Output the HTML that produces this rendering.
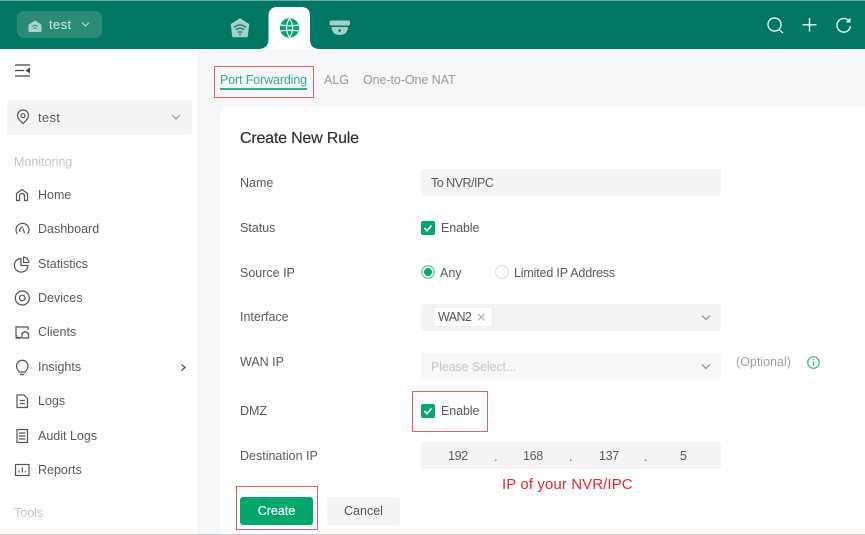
<!DOCTYPE html>
<html>
<head>
<meta charset="utf-8">
<style>
html,body{margin:0;padding:0;}
body{width:865px;height:535px;overflow:hidden;position:relative;background:#f6f7f9;font-family:"Liberation Sans",sans-serif;color:#555;}
.a{position:absolute;}
.t{position:absolute;white-space:nowrap;font-size:12.5px;line-height:17px;color:#5a5a5a;}
.box{position:absolute;background:#f4f4f4;border-radius:3px;}
.red{position:absolute;border:1px solid #ee5a62;box-sizing:border-box;}
.cb{position:absolute;width:14px;height:14px;background:#00a86b;border-radius:2px;}
svg{position:absolute;overflow:visible;}
</style>
</head>
<body>
<!-- top bar -->
<div class="a" style="left:0;top:0;width:865px;height:49px;background:#017864;"></div>
<div class="a" style="left:0;top:0;width:865px;height:1px;background:#6fa99c;"></div>
<div class="a" style="left:17px;top:11px;width:85px;height:27px;background:#2a8b79;border-radius:7px;"></div>
<svg style="left:0;top:0" width="865" height="49">
  <path d="M29 25 L35 21 L41 25 L41 31.500 L29 31.500 Z" fill="#a8d5cb" stroke="#a8d5cb" stroke-width="1" stroke-linejoin="round"/>
  <path d="M32 26.500 Q35 24 38 26.500 M33.500 28.500 Q35 27.300 36.500 28.500" fill="none" stroke="#2a8b79" stroke-width="1"/>
  <path d="M82 22.500 L85.500 26 L89 22.500" fill="none" stroke="#b5dcd3" stroke-width="1.200"/>
  <!-- wifi house -->
  <path d="M231.500 24.500 L240 19 L248.500 24.500 L247 36.500 L233 36.500 Z" fill="#a3d0c7" stroke="#a3d0c7" stroke-width="1.500" stroke-linejoin="round"/>
  <path d="M234 27.500 Q240 22.500 246 27.500 M236 30 Q240 26.500 244 30 M238 32.500 Q240 31 242 32.500" fill="none" stroke="#017864" stroke-width="1.200"/>
  <circle cx="240" cy="34.500" r="0.900" fill="#017864"/>
  <!-- active tab -->
  <path d="M258 49 Q268.500 49 268.500 39 L268.500 16 Q268.500 7 277.500 7 L301 7 Q310 7 310 16 L310 39 Q310 49 320 49 Z" fill="#fff"/>
  <circle cx="289.500" cy="28" r="9.700" fill="#00a86b"/>
  <path d="M289.500 18.300 Q283.500 28 289.500 37.700 Q295.500 28 289.500 18.300 M280 25 Q289.500 26.500 299 25 M280.200 31 Q289.500 29.500 298.800 31" fill="none" stroke="#fff" stroke-width="1.200"/>
  <!-- camera -->
  <rect x="329.500" y="20.500" width="20.500" height="5" rx="2" fill="#a3d0c7"/>
  <path d="M331.500 27 L348 27 Q347.500 35 339.700 35 Q332 35 331.500 27 Z" fill="#a3d0c7"/>
  <circle cx="339.700" cy="30.500" r="1.300" fill="#017864"/>
  <!-- right icons -->
  <circle cx="774.500" cy="24.500" r="6.500" fill="none" stroke="#e4f2ef" stroke-width="1.400"/>
  <path d="M779 29.500 L783 33" stroke="#e4f2ef" stroke-width="1.400" fill="none"/>
  <path d="M809.500 18 V31.500 M802.500 24.700 H816.500" stroke="#f0f8f6" stroke-width="1.500" fill="none"/>
  <path d="M849 21 A6.800 6.800 0 1 0 850.500 26" fill="none" stroke="#e4f2ef" stroke-width="1.400"/>
  <path d="M850.500 17.500 L850.500 22.500 L845.500 22.500 Z" fill="#e4f2ef"/>
</svg>
<div class="t" style="left:49px;top:16px;font-size:13px;color:#d6ece7;letter-spacing:.4px;">test</div>

<!-- sidebar -->
<div class="a" style="left:0;top:49px;width:198px;height:486px;background:#fff;border-right:1px solid #eef0f2;box-sizing:content-box;"></div>
<svg style="left:0;top:0" width="198" height="535">
  <path d="M15 65 H30 M15 70.500 H24 M15 76 H30" stroke="#444" stroke-width="1.300" fill="none"/>
  <path d="M30 67.500 L25.500 70.500 L30 73.500 Z" fill="#444"/>
</svg>
<div class="box" style="left:7px;top:100px;width:185px;height:35px;background:#f4f4f4;"></div>
<svg style="left:0;top:0" width="198" height="535" fill="none" stroke="#555" stroke-width="1.200">
  <path d="M23 123.500 C19.500 120.500 17.500 118 17.500 115.500 A5.500 5.500 0 0 1 28.500 115.500 C28.500 118 26.500 120.500 23 123.500 Z"/>
  <circle cx="23" cy="115.700" r="2"/>
  <path d="M172 115 L176 119 L180 115" stroke="#999"/>
  <!-- home -->
  <path d="M16.500 200.500 V193.500 L22 189.500 L27.500 193.500 V200.500 H24.500 V196 A2.500 2.500 0 0 0 19.500 196 V200.500 Z" stroke-linejoin="round"/>
  <!-- dashboard -->
  <path d="M17.500 234 A6.500 6.500 0 1 1 27.500 234 M20 232 A3.800 3.800 0 0 1 23 226.800 M24.500 233 L23 228.500"/>
  <!-- statistics -->
  <path d="M21 258.500 A6.800 6.800 0 1 0 28 265.500 H21 Z"/>
  <path d="M23.500 257 A6 6 0 0 1 28.800 262.500 H23.500 Z"/>
  <!-- devices -->
  <circle cx="22.300" cy="298" r="7"/><circle cx="22.300" cy="298" r="2.800"/>
  <!-- clients -->
  <path d="M17.500 336 H16 V327 H28 V330"/>
  <path d="M15.500 337.800 H21" stroke-width="1.800"/>
  <path d="M22 338 V333.500 L25 331.500 L28.500 333.500 V338 Z"/>
  <!-- insights -->
  <path d="M19.500 372 C17.500 370 16.500 368.500 16.500 366 A5.700 5.700 0 0 1 28 366 C28 368.500 27 370 25 372 Z"/>
  <path d="M20 374.500 H24.500" stroke-width="1.400"/>
  <path d="M181.500 364.500 L185 367.500 L181.500 370.500" stroke-width="1.300"/>
  <!-- logs -->
  <path d="M17 395 H24 L27.500 398.500 V407.500 H17 Z" stroke-linejoin="round"/>
  <path d="M19.800 400.500 H24.800 M19.800 403.500 H24.800"/>
  <!-- audit -->
  <rect x="17" y="429.500" width="10.500" height="13"/>
  <path d="M19 433 H25.500 M19 436 H25.500 M19 439 H25.500"/>
  <!-- reports -->
  <rect x="15.500" y="464.500" width="13.500" height="11"/>
  <path d="M19 472.500 V470.500 M22.300 472.500 V467.500 M25.500 472.500 V471"/>
</svg>
<div class="t" style="left:38px;top:109px;color:#5a5a5a;font-size:13px;letter-spacing:.3px;">test</div>
<div class="t" style="left:14px;top:154px;color:#c4c4c4;">Monitoring</div>
<div class="t" style="left:38px;top:187px;">Home</div>
<div class="t" style="left:38px;top:221px;">Dashboard</div>
<div class="t" style="left:38px;top:256px;">Statistics</div>
<div class="t" style="left:38px;top:290px;">Devices</div>
<div class="t" style="left:38px;top:324px;">Clients</div>
<div class="t" style="left:38px;top:359px;">Insights</div>
<div class="t" style="left:38px;top:393px;">Logs</div>
<div class="t" style="left:38px;top:428px;">Audit Logs</div>
<div class="t" style="left:38px;top:462px;">Reports</div>
<div class="t" style="left:14px;top:505px;color:#c4c4c4;">Tools</div>

<!-- tabs -->
<div class="t" style="left:220px;top:72px;color:#2eb089;letter-spacing:-.13px;">Port Forwarding</div>
<div class="a" style="left:220px;top:88px;width:87px;height:2px;background:#2eb089;"></div>
<div class="red" style="left:214px;top:66px;width:100px;height:32px;"></div>
<div class="t" style="left:324px;top:72px;color:#9a9a9a;">ALG</div>
<div class="t" style="left:363px;top:72px;color:#9a9a9a;letter-spacing:-.07px;">One-to-One NAT</div>

<!-- card -->
<div class="a" style="left:220px;top:107px;width:645px;height:428px;background:#fff;border-radius:8px 0 0 0;"></div>
<div class="t" style="left:240px;top:129px;font-size:16px;line-height:20px;color:#333;letter-spacing:-.2px;-webkit-text-stroke:.2px #333;">Create New Rule</div>

<div class="t" style="left:240px;top:175px;">Name</div>
<div class="t" style="left:240px;top:220px;">Status</div>
<div class="t" style="left:240px;top:265px;">Source IP</div>
<div class="t" style="left:240px;top:309px;">Interface</div>
<div class="t" style="left:240px;top:354px;">WAN IP</div>
<div class="t" style="left:240px;top:403px;">DMZ</div>
<div class="t" style="left:240px;top:448px;">Destination IP</div>

<div class="box" style="left:421px;top:169px;width:300px;height:27px;"></div>
<div class="t" style="left:431px;top:175px;letter-spacing:-.5px;">To NVR/IPC</div>

<div class="cb" style="left:421px;top:221px;"></div>
<svg style="left:421px;top:221px" width="14" height="14"><path d="M3.500 7 L6 9.800 L10.500 4.500" fill="none" stroke="#fff" stroke-width="1.700"/></svg>
<div class="t" style="left:441px;top:220px;letter-spacing:-.1px;">Enable</div>

<svg style="left:421px;top:265px" width="14" height="14"><circle cx="7" cy="7" r="6.300" fill="#fff" stroke="#3ab890" stroke-width="1"/><circle cx="7" cy="7" r="4" fill="#00a86b"/></svg>
<div class="t" style="left:440px;top:265px;">Any</div>
<svg style="left:495px;top:265px" width="14" height="14"><circle cx="7" cy="7" r="6.500" fill="#fff" stroke="#ddd" stroke-width="1"/></svg>
<div class="t" style="left:514px;top:265px;letter-spacing:-.17px;">Limited IP Address</div>

<div class="box" style="left:421px;top:304px;width:300px;height:27px;"></div>
<div class="a" style="left:433px;top:307px;width:60px;height:20px;background:#fff;border:1px solid #ececec;border-radius:2px;box-sizing:border-box;"></div>
<div class="t" style="left:438px;top:309px;color:#555;letter-spacing:-.6px;">WAN2</div>
<svg style="left:421px;top:304px" width="300" height="27" fill="none">
  <path d="M57 10 L63.500 16.500 M63.500 10 L57 16.500" stroke="#aaa" stroke-width="1"/>
  <path d="M281 11.500 L285 15.500 L289 11.500" stroke="#888" stroke-width="1.200"/>
</svg>

<div class="box" style="left:421px;top:353px;width:300px;height:27px;background:#f8f8f8;"></div>
<div class="t" style="left:431px;top:359px;color:#c6c6c6;letter-spacing:-.12px;">Please Select...</div>
<svg style="left:421px;top:353px" width="300" height="27" fill="none"><path d="M281 11.500 L285 15.500 L289 11.500" stroke="#888" stroke-width="1.200"/></svg>
<div class="t" style="left:736px;top:354px;color:#a0a0a0;">(Optional)</div>
<svg style="left:807px;top:356px" width="13" height="13" fill="none">
  <circle cx="6.500" cy="6.500" r="5.800" stroke="#33b98d" stroke-width="1.200"/>
  <path d="M6.500 5.500 V10 M6.500 3 V4.200" stroke="#33b98d" stroke-width="1.300"/>
</svg>

<div class="cb" style="left:421px;top:404px;"></div>
<svg style="left:421px;top:404px" width="14" height="14"><path d="M3.500 7 L6 9.800 L10.500 4.500" fill="none" stroke="#fff" stroke-width="1.700"/></svg>
<div class="t" style="left:441px;top:403px;letter-spacing:-.1px;">Enable</div>
<div class="red" style="left:412px;top:391px;width:76px;height:41px;"></div>

<div class="box" style="left:421px;top:442px;width:300px;height:27px;"></div>
<div class="t" style="left:448px;top:448px;letter-spacing:-.3px;">192</div>
<div class="t" style="left:494px;top:449px;">.</div>
<div class="t" style="left:523px;top:448px;letter-spacing:-.3px;">168</div>
<div class="t" style="left:569px;top:449px;">.</div>
<div class="t" style="left:599px;top:448px;letter-spacing:-.3px;">137</div>
<div class="t" style="left:644px;top:449px;">.</div>
<div class="t" style="left:680px;top:448px;">5</div>

<div class="t" style="left:502px;top:476px;font-size:15px;line-height:18px;color:#e8262c;letter-spacing:.1px;">IP of your NVR/IPC</div>

<div class="red" style="left:236px;top:486px;width:82px;height:44px;"></div>
<div class="a" style="left:240px;top:497px;width:73px;height:28px;background:#00a86b;border-radius:3px;color:#fff;font-size:12.5px;line-height:28px;text-align:center;-webkit-text-stroke:.2px #fff;">Create</div>
<div class="a" style="left:327px;top:497px;width:73px;height:28px;background:#f4f4f4;border-radius:3px;color:#555;font-size:12.5px;line-height:28px;text-align:center;">Cancel</div>

<!-- bottom edge -->
<div class="a" style="left:0;top:534px;width:865px;height:1px;background:#c9c6c4;"></div>
</body>
</html>
